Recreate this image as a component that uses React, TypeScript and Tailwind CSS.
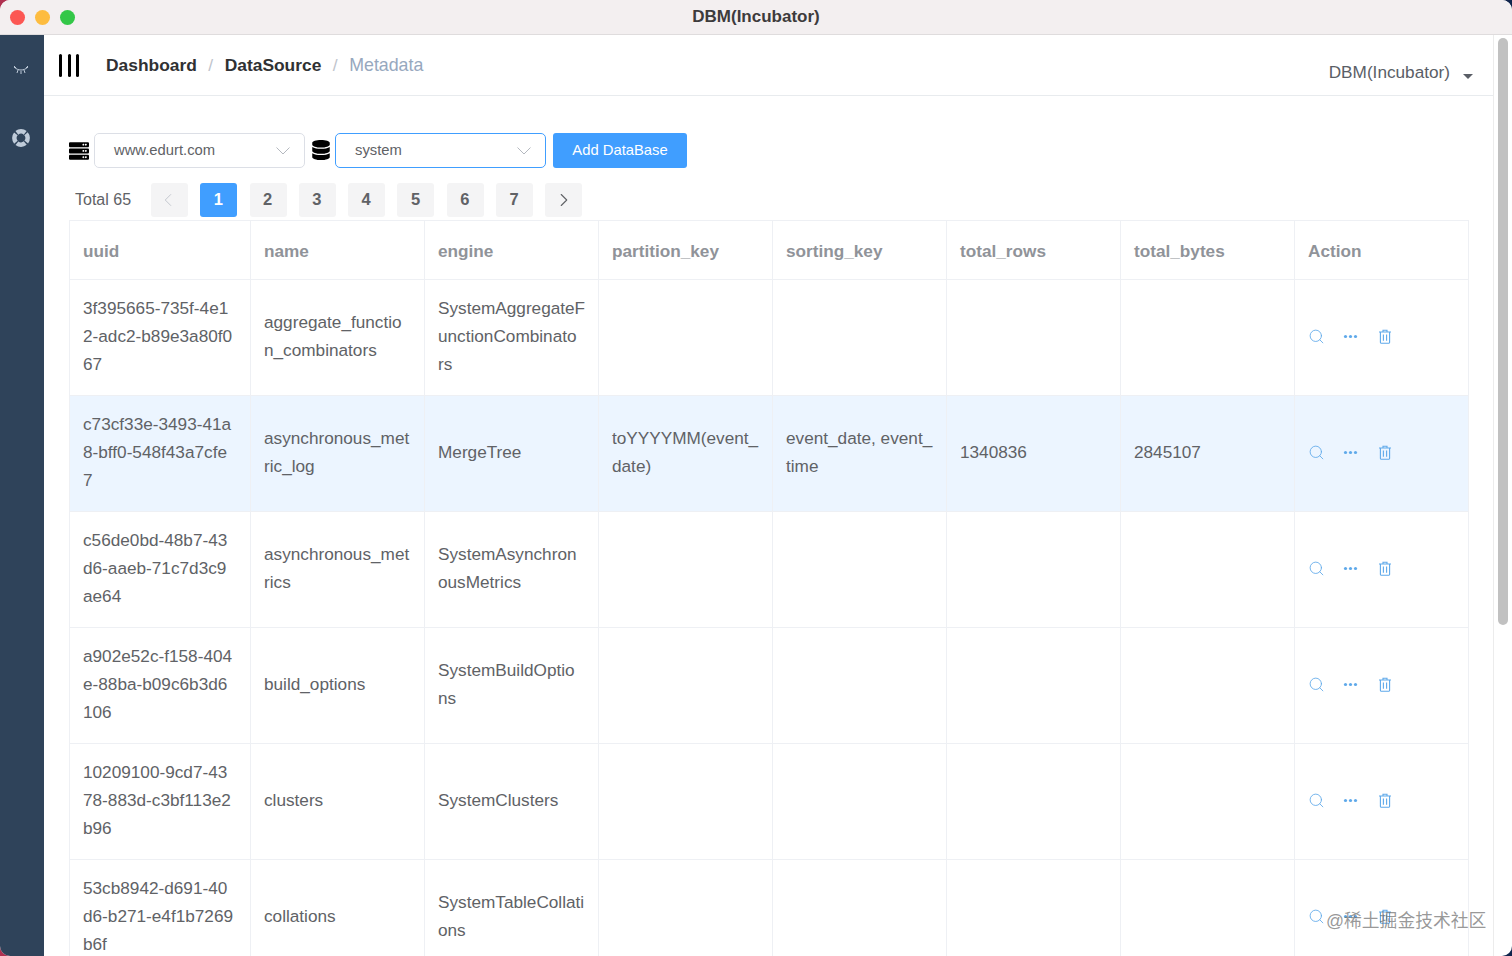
import React from 'react';
import { FaServer, FaDatabase } from 'react-icons/fa';
import { ChevronLeft, ChevronRight, Search } from 'lucide-react';

const columns = ['uuid', 'name', 'engine', 'partition_key', 'sorting_key', 'total_rows', 'total_bytes', 'Action'];

// line breaks are where the narrow table cells wrap
const rows = [
  { uuid: '3f395665-735f-4e1\n2-adc2-b89e3a80f0\n67', name: 'aggregate_functio\nn_combinators', engine: 'SystemAggregateF\nunctionCombinato\nrs', partition: '', sorting: '', totalRows: '', totalBytes: '' },
  { uuid: 'c73cf33e-3493-41a\n8-bff0-548f43a7cfe\n7', name: 'asynchronous_met\nric_log', engine: 'MergeTree', partition: 'toYYYYMM(event_\ndate)', sorting: 'event_date, event_\ntime', totalRows: '1340836', totalBytes: '2845107' },
  { uuid: 'c56de0bd-48b7-43\nd6-aaeb-71c7d3c9\nae64', name: 'asynchronous_met\nrics', engine: 'SystemAsynchron\nousMetrics', partition: '', sorting: '', totalRows: '', totalBytes: '' },
  { uuid: 'a902e52c-f158-404\ne-88ba-b09c6b3d6\n106', name: 'build_options', engine: 'SystemBuildOptio\nns', partition: '', sorting: '', totalRows: '', totalBytes: '' },
  { uuid: '10209100-9cd7-43\n78-883d-c3bf113e2\nb96', name: 'clusters', engine: 'SystemClusters', partition: '', sorting: '', totalRows: '', totalBytes: '' },
  { uuid: '53cb8942-d691-40\nd6-b271-e4f1b7269\nb6f', name: 'collations', engine: 'SystemTableCollati\nons', partition: '', sorting: '', totalRows: '', totalBytes: '' },
];

const TrashIcon = () => (
  <svg width="14" height="15" viewBox="0 0 14 15" fill="none" stroke="currentColor" strokeWidth="1.1">
    <path d="M1 3h12M5 3V1.2h4V3M2.4 3v10.6c0 .4.2.6.6.6h8c.4 0 .6-.2.6-.6V3M5.4 5.5v6.2M8.6 5.5v6.2" />
  </svg>
);

const SelectBox = ({ value, focused }: { value: string; focused?: boolean }) => (
  <div
    className={`w-[211px] h-[35px] flex items-center justify-between pl-[19px] pr-[14px] rounded-[5px] border text-[14.8px] text-[#606266] ${
      focused ? 'border-[#409eff]' : 'border-[#dcdfe6]'
    }`}
  >
    <span>{value}</span>
    <svg width="14" height="8" viewBox="0 0 14 8" fill="none" stroke="#b4b8bf" strokeWidth="1">
      <path d="M.5.5 7 7l6.5-6.5" />
    </svg>
  </div>
);

const Pager = () => (
  <div className="flex items-center mt-[15px] pl-[6px] h-[35px]">
    <span className="w-[76px] text-[16px] text-[#606266]">Total 65</span>
    <div className="flex items-center gap-[12.3px] text-[16.5px] font-bold text-[#606266]">
      <div className="w-[37px] h-[34px] rounded-[3px] bg-[#f4f4f5] flex items-center justify-center text-[#c0c4cc] pr-[3px]">
        <ChevronLeft size={22} strokeWidth={1} />
      </div>
      {[1, 2, 3, 4, 5, 6, 7].map((n) => (
        <div
          key={n}
          className={`w-[37px] h-[34px] rounded-[3px] flex items-center justify-center pr-[1px] ${
            n === 1 ? 'bg-[#409eff] text-white' : 'bg-[#f4f4f5]'
          }`}
        >
          {n}
        </div>
      ))}
      <div className="w-[37px] h-[34px] rounded-[3px] bg-[#f4f4f5] flex items-center justify-center">
        <ChevronRight size={22} strokeWidth={1.2} />
      </div>
    </div>
  </div>
);

const App: React.FC = () => {
  return (
    <div className="w-[1512px] h-[956px] overflow-hidden bg-[linear-gradient(90deg,#b03050,#10244c)] font-['Liberation_Sans',Arial,sans-serif]">
      <div className="relative w-full h-full flex flex-col overflow-hidden rounded-[10px] bg-white">
        {/* Title bar */}
        <div className="relative h-[35px] shrink-0 flex items-center justify-center bg-[#f3eff0] border-b border-[#dfdcdd]">
          <div className="absolute left-[10px] top-[10px] flex gap-[10px]">
            <span className="w-[15px] h-[15px] rounded-full bg-[#fc5753]" />
            <span className="w-[15px] h-[15px] rounded-full bg-[#fdbc40]" />
            <span className="w-[15px] h-[15px] rounded-full bg-[#33c748]" />
          </div>
          <span className="text-[17px] font-bold text-[#3d3b3c]">DBM(Incubator)</span>
        </div>

        <div className="flex flex-1 min-h-0">
          {/* Sidebar */}
          <aside className="w-[44px] shrink-0 bg-[#2f435a] flex flex-col items-center text-[#bfcbd9]">
            <svg className="mt-[30px] mr-[2px]" width="16" height="10" viewBox="0 0 16 10" fill="none" stroke="currentColor" strokeWidth="1">
              <path d="M1 2c4 4 10 4 14 0M1 1l2 2M15 1l-2 2M5 5l-1 3M11 5l1 3M8 6v3" />
            </svg>
            <svg className="mt-[54px] mr-[2px]" width="18" height="18" viewBox="0 0 18 18" fill="none" stroke="currentColor" strokeWidth="4.6">
              <circle cx="9" cy="9" r="6.6" strokeDasharray="8.9 1.47" transform="rotate(-40.5 9 9)" />
            </svg>
          </aside>

          {/* Main */}
          <main className="flex-1 min-w-0 flex flex-col border-r border-[#ececec]">
            <header className="relative h-[61px] shrink-0 flex items-center pl-[15px] pr-[20px] border-b border-[#e8ebee]">
              <div className="flex gap-[5.5px] h-[23px] mt-[1px]">
                <span className="w-[3px] rounded-full bg-black" />
                <span className="w-[3px] rounded-full bg-black" />
                <span className="w-[3px] rounded-full bg-black" />
              </div>
              <nav className="flex items-center ml-[27px] text-[17.4px] font-bold text-[#303133]">
                <span>Dashboard</span>
                <span className="mx-[11.5px] font-normal text-[#c0c4cc]">/</span>
                <span>DataSource</span>
                <span className="mx-[11.5px] font-normal text-[#c0c4cc]">/</span>
                <span className="font-normal text-[17.8px] text-[#97a8be]">Metadata</span>
              </nav>
              <div className="ml-auto flex items-center text-[17.2px] text-[#5a5e66] mt-[15px]">
                <span>DBM(Incubator)</span>
                <span className="ml-[13px] mt-[9px] border-x-[5px] border-t-[5px] border-x-transparent border-t-[#5a5e66]" />
              </div>
            </header>

            <div className="flex-1 min-h-0 overflow-hidden pl-[25px] pt-[37px]">
              <div className="flex items-center h-[35px]">
                <FaServer size={20} className="text-black" />
                <div className="ml-[5px]">
                  <SelectBox value="www.edurt.com" />
                </div>
                <FaDatabase size={20} className="text-black ml-[6px] mb-[1px]" />
                <div className="ml-[4px]">
                  <SelectBox value="system" focused />
                </div>
                <button className="ml-[7px] w-[134px] h-[35px] rounded-[3px] bg-[#409eff] text-white text-[14.8px]">
                  Add DataBase
                </button>
              </div>

              <div className="-mt-[1px]">
                <Pager />
              </div>

              <table className="table-fixed w-[1399px] mt-[3px] border-collapse text-[17.2px] leading-[28px] text-[#606266]">
                <colgroup>
                  <col className="w-[181px]" />
                  {[0, 1, 2, 3, 4, 5, 6].map((i) => (
                    <col key={i} className="w-[174px]" />
                  ))}
                </colgroup>
                <thead>
                  <tr className="h-[59px]">
                    {columns.map((c) => (
                      <th key={c} className="border border-[#eef0f4] pl-[13px] pr-[13px] pt-[2px] text-left font-bold text-[#909399]">
                        {c}
                      </th>
                    ))}
                  </tr>
                </thead>
                <tbody>
                  {rows.map((r, i) => (
                    <tr key={r.uuid} className={`h-[116px] ${i === 1 ? 'bg-[#ecf5ff]' : ''}`}>
                      {[r.uuid, r.name, r.engine, r.partition, r.sorting, r.totalRows, r.totalBytes].map((v, j) => (
                        <td key={j} className="border border-[#eef0f4] px-[13px] pb-[3px] whitespace-pre-line">
                          {v}
                        </td>
                      ))}
                      <td className="border border-[#eef0f4] px-[13px] pb-[3px]">
                        <div className="flex items-center text-[#5fa9ea]">
                          <Search size={17} strokeWidth={1.2} />
                          <svg className="ml-[18px]" width="15" height="5" viewBox="0 0 15 5" fill="currentColor">
                            <circle cx="2.5" cy="2.5" r="1.6" />
                            <circle cx="7.5" cy="2.5" r="1.6" />
                            <circle cx="12.5" cy="2.5" r="1.6" />
                          </svg>
                          <span className="ml-[20px]">
                            <TrashIcon />
                          </span>
                        </div>
                      </td>
                    </tr>
                  ))}
                </tbody>
              </table>
            </div>
          </main>

          {/* Scrollbar */}
          <div className="w-[18px] shrink-0 pl-[4px] pr-[4px] pt-[3px]">
            <div className="w-[10px] h-[587px] rounded-full bg-[#c1c1c1]" />
          </div>
        </div>

        <span className="absolute left-[1326px] top-[908px] text-[17.8px] text-[#6b6b6b]/70 font-['Liberation_Sans','Noto_Sans_CJK_SC',sans-serif]">
          @稀土掘金技术社区
        </span>
      </div>
    </div>
  );
};

export default App;
